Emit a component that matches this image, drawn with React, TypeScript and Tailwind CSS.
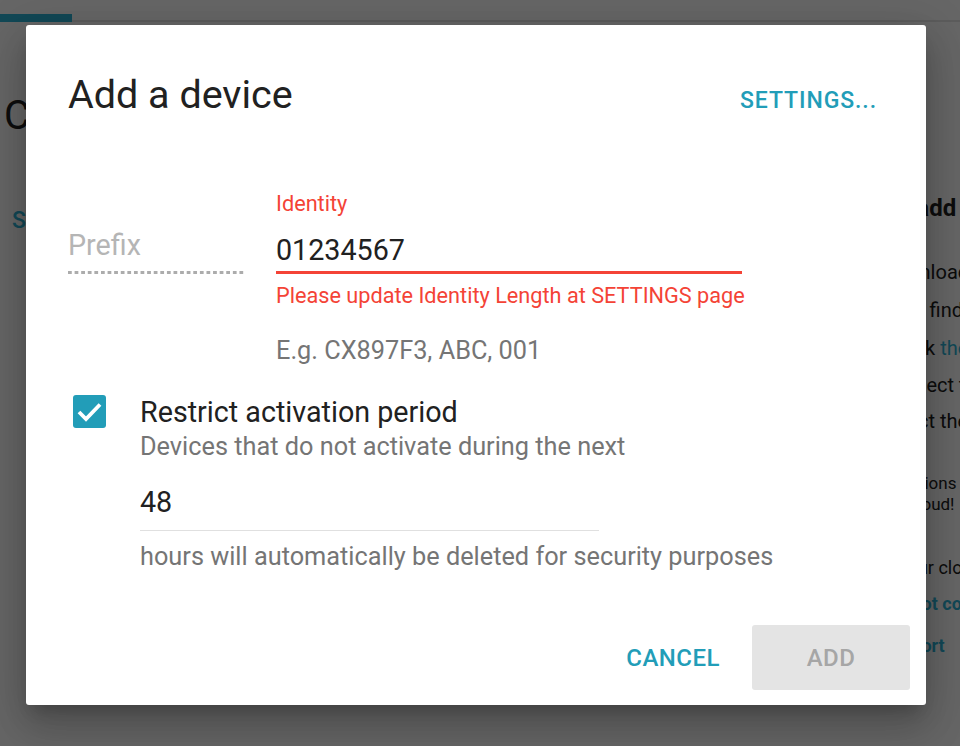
import React from "react";

const TEAL = "#229db8";

export default function App() {
  return (
    <div className="relative w-[960px] h-[746px] overflow-hidden bg-white font-['Roboto',sans-serif]">
      {/* underlying page */}
      <div className="flex flex-col h-full">
        <div className="relative h-[22px] border-b-2 border-[#e6e6e6] shrink-0">
          <div className="absolute left-0 bottom-[-2px] w-[72px] h-[8px] bg-[#2db5d8]" />
        </div>
        <div className="flex flex-1">
          <div className="flex-1 pl-[4px] flex flex-col">
            <div className="mt-[70px] text-[40px] leading-[48px] text-[#212121] whitespace-nowrap">Connected devices</div>
            <div className="mt-[66px] pl-[8px] text-[23px] leading-[30px] font-medium text-[#2db5d8]">SHOW ALL</div>
          </div>
          <div className="w-[80px] flex flex-col text-[#212121] whitespace-nowrap">
            <div className="mt-[171px] ml-[4px] text-[24px] leading-[30px] font-bold">To add a device</div>
            <div className="mt-[30px] text-[20px] leading-[38px]">Download the app</div>
            <div className="text-[20px] leading-[38px]">Then find it</div>
            <div className="text-[20px] leading-[38px]">
              Check <span className="text-[#2db5d8]">the link</span>
            </div>
            <div className="text-[20px] leading-[37px]">Connect the</div>
            <div className="text-[20px] leading-[35px]">Select the</div>
            <div className="mt-[34px] text-[17px] leading-[21px]">Questions</div>
            <div className="text-[17px] leading-[21px]">Via cloud!</div>
            <div className="mt-[35px] text-[18px] leading-[36px]">In your cloud</div>
            <div className="text-[18px] leading-[36px] font-bold text-[#2db5d8]">Cannot connect?</div>
            <div className="mt-[6px] text-[18px] leading-[36px] font-bold text-[#2db5d8]">Support</div>
          </div>
        </div>
      </div>

      {/* scrim */}
      <div className="absolute inset-0 bg-black/60" />

      {/* dialog */}
      <div className="absolute inset-0 pl-[26px] pt-[25px]">
        <div className="w-[900px] h-[680px] bg-white rounded-[3px] flex flex-col shadow-[0_24px_38px_3px_rgba(0,0,0,0.14),0_9px_46px_8px_rgba(0,0,0,0.12),0_11px_15px_-7px_rgba(0,0,0,0.2)]">
          <div className="pt-[46px] pl-[42px] pr-[49px] flex justify-between items-start">
            <div className="text-[39.5px] leading-[48px] text-[#212121]">Add a device</div>
            <div className="mt-[6px] text-[23px] leading-[48px] font-medium tracking-[0.04em]" style={{ color: TEAL }}>
              SETTINGS...
            </div>
          </div>

          <div className="pl-[42px] mt-[67px] flex items-start gap-[30px]">
            <div className="w-[178px] pt-[32px] flex flex-col">
              <div className="text-[28.7px] leading-[42px] text-[#b5b5b5] pb-[5px]">Prefix</div>
              <div className="h-[3px] bg-[linear-gradient(to_right,#acacac_55%,transparent_55%)] bg-[length:6.6px_3px] bg-repeat-x" />
            </div>
            <div className="w-[466px] flex flex-col">
              <div className="text-[21.7px] leading-[24px] text-[#f44336]">Identity</div>
              <div className="mt-[13px] text-[28.7px] leading-[42px] text-[#212121] border-b-[3px] border-[#f44336]">01234567</div>
              <div className="mt-[10px] text-[21.7px] leading-[24px] text-[#f44336] whitespace-nowrap">
                Please update Identity Length at SETTINGS page
              </div>
              <div className="mt-[28px] text-[25.3px] leading-[30px] text-[#757575]">E.g. CX897F3, ABC, 001</div>
            </div>
          </div>

          <div className="pl-[42px] mt-[29px] flex">
            <div className="w-[72px] pl-[5px] pt-[0px]">
              <div className="w-[33px] h-[33px] rounded-[3px] flex items-center justify-center" style={{ backgroundColor: TEAL }}>
                <svg width="33" height="33" viewBox="0 0 33 33">
                  <path d="M6 17 L13 24 L27 9.5" fill="none" stroke="white" strokeWidth="3.8" />
                </svg>
              </div>
            </div>
            <div className="flex flex-col">
              <div className="text-[28.7px] leading-[34px] text-[#212121]">Restrict activation period</div>
              <div className="mt-[3px] text-[25.3px] leading-[30px] text-[#757575] whitespace-nowrap">Devices that do not activate during the next</div>
              <div className="mt-[23px] w-[459px] pb-[11px] border-b border-[#e0e0e0] text-[28.7px] leading-[34px] text-[#212121]">48</div>
              <div className="mt-[11px] text-[25.3px] leading-[30px] text-[#757575] whitespace-nowrap">
                hours will automatically be deleted for security purposes
              </div>
            </div>
          </div>

          <div className="mt-auto pr-[16px] pb-[15px] flex justify-end gap-[16px]">
            <button className="h-[65px] px-[16px] text-[24px] font-medium tracking-[0.02em]" style={{ color: TEAL }}>
              CANCEL
            </button>
            <button className="h-[65px] w-[158px] rounded-[3px] bg-[#e4e4e4] text-[24px] font-medium tracking-[0.02em] text-[#a6a6a6]">
              ADD
            </button>
          </div>
        </div>
      </div>
    </div>
  );
}
